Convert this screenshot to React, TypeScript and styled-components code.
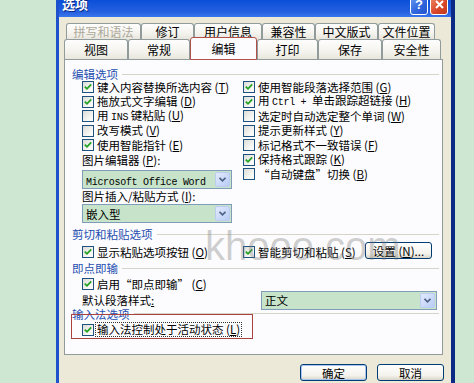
import React from 'react';
import styled, { createGlobalStyle } from 'styled-components';

const GlobalStyle = createGlobalStyle`
  html, body { margin: 0; padding: 0; }
  body {
    background: #cde7d2;
    font-family: "Noto Sans CJK SC", "Liberation Sans", sans-serif;
    font-size: 12px;
    color: #000;
  }
`;

const Page = styled.div`
  width: 474px;
  height: 383px;
  overflow: hidden;
  display: flex;
  padding-left: 56px;
  box-sizing: border-box;
`;

const Dialog = styled.div`
  flex: none;
  width: 399px;
  height: 420px;
  box-sizing: border-box;
  display: flex;
  flex-direction: column;
  background: #ece9d8;
  border-left: 3px solid #1d52cc;
  border-right: 4px solid #0a2a86;
`;

const TitleBar = styled.div`
  height: 15px;
  overflow: hidden;
  display: flex;
  align-items: flex-end;
  justify-content: space-between;
  padding: 0 3px 2px 3px;
  background: linear-gradient(#0a4fd8, #2560e0 70%, #3a76ea);
`;

const Title = styled.div`
  color: #fff;
  font-weight: bold;
  font-size: 13px;
  line-height: 13px;
  margin-bottom: 5px;
  text-shadow: 1px 1px 0 #0a2a86;
`;

const Caption = styled.div`
  display: flex;
  gap: 2px;
`;

const CapButton = styled.div<{ $kind: 'help' | 'close' }>`
  width: 18px;
  height: 21px;
  box-sizing: border-box;
  border: 1px solid #fff;
  border-radius: 3px;
  display: flex;
  align-items: center;
  justify-content: center;
  color: #fff;
  font-weight: bold;
  font-family: "Liberation Sans", sans-serif;
  font-size: 13px;
  background: ${(p) =>
    p.$kind === 'close'
      ? 'linear-gradient(135deg, #f0906e, #d9472a 60%, #c23a1e)'
      : 'linear-gradient(135deg, #6d9cf4, #2e64dc 60%, #2356cc)'};
`;

const Body = styled.div`
  display: flex;
  flex-direction: column;
  padding: 6px 7px 0 5px;
`;

const Tabs = styled.div`
  display: flex;
  flex-direction: column;
`;

const TabRow = styled.div<{ $indent: number; $height: number }>`
  display: flex;
  align-items: flex-start;
  height: ${(p) => p.$height}px;
  padding-left: ${(p) => p.$indent}px;
`;

const Tab = styled.div<{ $w: number; $active?: boolean; $disabled?: boolean }>`
  flex: none;
  width: ${(p) => p.$w}px;
  height: ${(p) => (p.$active ? '23px' : '100%')};
  margin-top: ${(p) => (p.$active ? -2 : 0)}px;
  box-sizing: border-box;
  border: 1px solid ${(p) => (p.$active ? '#b0504a' : '#919b9c')};
  border-bottom: ${(p) => (p.$active ? '1px solid #b0504a' : 'none')};
  border-radius: 3px 3px 0 0;
  background: ${(p) =>
    p.$active ? '#fcfcfe' : 'linear-gradient(#fefefe, #f4f3ee 60%, #e8e6dc)'};
  color: ${(p) => (p.$disabled ? '#aca899' : '#000')};
  display: flex;
  align-items: center;
  justify-content: center;
  font-size: 12px;
  line-height: 14px;
  position: relative;
  z-index: ${(p) => (p.$active ? 2 : 0)};
`;

const Panel = styled.div`
  position: relative;
  width: 379px;
  height: 296px;
  box-sizing: border-box;
  border: 1px solid #919b9c;
  background: #fcfcfe;
  padding: 8px 3px 0 7px;
  display: flex;
  flex-direction: column;
  font-size: 11.5px;
`;

const GroupHeader = styled.div<{ $mt?: number }>`
  display: flex;
  align-items: center;
  gap: 4px;
  height: 12px;
  margin-top: ${(p) => p.$mt ?? 0}px;
  color: #1f4fb0;
  font-size: 11.5px;
  line-height: 12px;
  &::after {
    content: '';
    flex: 1;
    height: 1px;
    background: #d6d4c8;
  }
`;

const OptionGrid = styled.div`
  display: grid;
  grid-template-columns: 161px 1fr;
  margin-left: 10px;
`;

const Column = styled.div`
  display: flex;
  flex-direction: column;
`;

const Row = styled.div<{ $h?: number; $mt?: number }>`
  display: flex;
  align-items: center;
  height: ${(p) => p.$h ?? 14.5}px;
  margin-top: ${(p) => p.$mt ?? 0}px;
  white-space: nowrap;
`;

const Box = styled.span`
  flex: none;
  width: 12px;
  height: 12px;
  box-sizing: border-box;
  border: 1px solid #1c5180;
  background: linear-gradient(135deg, #dcdcd7, #fbfbf9 80%);
  display: flex;
  align-items: center;
  justify-content: center;
`;

const OptText = styled.span<{ $focus?: boolean }>`
  margin-left: 2px;
  font-size: 11.5px;
  line-height: 13px;
  padding: 0 1px;
  outline: ${(p) => (p.$focus ? '1px dotted #333' : 'none')};
`;

const Key = styled.span`
  text-decoration: underline;
`;

const Mono = styled.span`
  font-family: "Liberation Mono", monospace;
  font-size: 10px;
  letter-spacing: -0.3px;
`;

const FieldLabel = styled.div<{ $h: number }>`
  height: ${(p) => p.$h}px;
  display: flex;
  align-items: center;
  font-size: 11.5px;
  white-space: nowrap;
`;

const Select = styled.div<{ $w: number; $mt?: number }>`
  flex: none;
  width: ${(p) => p.$w}px;
  height: 19px;
  margin-top: ${(p) => p.$mt ?? 0}px;
  box-sizing: border-box;
  border: 1px solid #7f9db9;
  background: #c7e4ca;
  display: flex;
  align-items: center;
  padding-left: 3px;
  font-size: 11.5px;
  white-space: nowrap;
`;

const SelectValue = styled.span`
  flex: 1;
  overflow: hidden;
`;

const ArrowBtn = styled.span`
  flex: none;
  width: 15px;
  height: 15px;
  margin-right: 1px;
  box-sizing: border-box;
  border: 1px solid #bccbf0;
  border-radius: 2px;
  background: linear-gradient(135deg, #e2eafc, #b8ccf6);
  display: flex;
  align-items: center;
  justify-content: center;
`;

const PushButton = styled.div<{ $w: number; $default?: boolean }>`
  flex: none;
  width: ${(p) => p.$w}px;
  height: 17px;
  box-sizing: border-box;
  border: 1px solid #003c74;
  border-radius: 3px;
  background: linear-gradient(#ffffff, #f3f2ec 70%, #d9d5c9);
  box-shadow: ${(p) => (p.$default ? 'inset 0 0 0 1px #a8c4f0' : 'none')};
  display: flex;
  align-items: center;
  justify-content: center;
  font-size: 11.5px;
  white-space: nowrap;
`;

const CutCell = styled.div`
  display: flex;
  align-items: center;
  justify-content: space-between;
  padding-right: 7px;
`;

const StyleRow = styled.div`
  display: flex;
  align-items: center;
  justify-content: space-between;
  height: 17px;
  margin-left: 10px;
  margin-right: 2px;
`;

const ImeSection = styled.div`
  position: relative;
  display: flex;
  flex-direction: column;
  margin-top: -1px;
`;

const Annotation = styled.div`
  position: absolute;
  left: -1px;
  top: 6px;
  width: 182px;
  height: 25px;
  box-sizing: border-box;
  border: 1px solid #a8423f;
  pointer-events: none;
`;

const Watermark = styled.div`
  position: absolute;
  left: 140px;
  top: 166px;
  font-family: "Liberation Sans", sans-serif;
  font-size: 40px;
  line-height: 40px;
  color: rgba(120, 120, 120, 0.36);
  pointer-events: none;
  white-space: nowrap;
`;

const ButtonBar = styled.div`
  display: flex;
  justify-content: flex-end;
  gap: 10px;
  margin-top: 9px;
`;

const CheckMark = () => (
  <svg width="8" height="8" viewBox="0 0 8 8">
    <path d="M0.8 3.6 L3 5.8 L7.2 1.4" stroke="#21a121" strokeWidth="1.7" fill="none" />
  </svg>
);

const Arrow = () => (
  <svg width="7" height="5" viewBox="0 0 7 5">
    <path d="M0.5 0.8 L3.5 3.8 L6.5 0.8" stroke="#4d6185" strokeWidth="1.6" fill="none" />
  </svg>
);

const Option: React.FC<{ checked?: boolean; focus?: boolean; children: React.ReactNode; h?: number; mt?: number }> = ({
  checked,
  focus,
  children,
  h,
  mt,
}) => (
  <Row $h={h} $mt={mt}>
    <Box>{checked && <CheckMark />}</Box>
    <OptText $focus={focus}>{children}</OptText>
  </Row>
);

const Combo: React.FC<{ w: number; mt?: number; children: React.ReactNode }> = ({ w, mt, children }) => (
  <Select $w={w} $mt={mt}>
    <SelectValue>{children}</SelectValue>
    <ArrowBtn>
      <Arrow />
    </ArrowBtn>
  </Select>
);

const row1 = [
  { t: '拼写和语法', w: 75, disabled: true },
  { t: '修订', w: 53 },
  { t: '用户信息', w: 68 },
  { t: '兼容性', w: 53 },
  { t: '中文版式', w: 63 },
  { t: '文件位置', w: 57 },
];

const row2 = [
  { t: '视图', w: 64 },
  { t: '常规', w: 62 },
  { t: '编辑', w: 67, active: true },
  { t: '打印', w: 61 },
  { t: '保存', w: 64 },
  { t: '安全性', w: 59 },
];

export default function App() {
  return (
    <>
      <GlobalStyle />
      <Page>
        <Dialog>
          <TitleBar>
            <Title>选项</Title>
            <Caption>
              <CapButton $kind="help">?</CapButton>
              <CapButton $kind="close">
                <svg width="9" height="9" viewBox="0 0 9 9">
                  <path d="M1 1 L8 8 M8 1 L1 8" stroke="#fff" strokeWidth="2" />
                </svg>
              </CapButton>
            </Caption>
          </TitleBar>
          <Body>
            <Tabs>
              <TabRow $indent={2} $height={16}>
                {row1.map((t) => (
                  <Tab key={t.t} $w={t.w} $disabled={t.disabled}>
                    {t.t}
                  </Tab>
                ))}
              </TabRow>
              <TabRow $indent={0} $height={20}>
                {row2.map((t) => (
                  <Tab key={t.t} $w={t.w} $active={t.active}>
                    {t.t}
                  </Tab>
                ))}
              </TabRow>
            </Tabs>
            <Panel>
              <GroupHeader>编辑选项</GroupHeader>
              <OptionGrid>
                <Column>
                  <Option checked>
                    键入内容替换所选内容 (<Key>T</Key>)
                  </Option>
                  <Option checked>
                    拖放式文字编辑 (<Key>D</Key>)
                  </Option>
                  <Option>
                    用 <Mono>INS</Mono> 键粘贴 (<Key>U</Key>)
                  </Option>
                  <Option>
                    改写模式 (<Key>V</Key>)
                  </Option>
                  <Option checked>
                    使用智能指针 (<Key>E</Key>)
                  </Option>
                  <FieldLabel $h={14.5}>
                    图片编辑器 (<Key>P</Key>):
                  </FieldLabel>
                  <Combo w={150} mt={3}>
                    <Mono>Microsoft Office Word</Mono>
                  </Combo>
                  <FieldLabel $h={14}>
                    图片插入/粘贴方式 (<Key>I</Key>):
                  </FieldLabel>
                  <Combo w={150} mt={1}>
                    嵌入型
                  </Combo>
                </Column>
                <Column>
                  <Option checked>
                    使用智能段落选择范围 (<Key>G</Key>)
                  </Option>
                  <Option checked>
                    用 <Mono>Ctrl + </Mono>单击跟踪超链接 (<Key>H</Key>)
                  </Option>
                  <Option>
                    选定时自动选定整个单词 (<Key>W</Key>)
                  </Option>
                  <Option>
                    提示更新样式 (<Key>Y</Key>)
                  </Option>
                  <Option>
                    标记格式不一致错误 (<Key>F</Key>)
                  </Option>
                  <Option checked>
                    保持格式跟踪 (<Key>K</Key>)
                  </Option>
                  <Option>
                    “自动键盘”切换 (<Key>B</Key>)
                  </Option>
                </Column>
              </OptionGrid>

              <GroupHeader $mt={5}>剪切和粘贴选项</GroupHeader>
              <OptionGrid>
                <Option checked h={18} mt={3}>
                  显示粘贴选项按钮 (<Key>O</Key>)
                </Option>
                <CutCell>
                  <Option checked h={18} mt={3}>
                    智能剪切和粘贴 (<Key>S</Key>)
                  </Option>
                  <PushButton $w={67}>
                    设置 (<Key>N</Key>)...
                  </PushButton>
                </CutCell>
              </OptionGrid>

              <GroupHeader $mt={1}>即点即输</GroupHeader>
              <OptionGrid>
                <Option checked mt={3}>
                  启用“即点即输” (<Key>C</Key>)
                </Option>
              </OptionGrid>
              <StyleRow>
                <FieldLabel $h={17}>
                  默认段落样式<Key>:</Key>
                </FieldLabel>
                <Combo w={176}>正文</Combo>
              </StyleRow>

              <ImeSection>
                <GroupHeader>输入法选项</GroupHeader>
                <OptionGrid>
                  <Option checked focus mt={3}>
                    输入法控制处于活动状态 (<Key>L</Key>)
                  </Option>
                </OptionGrid>
                <Annotation />
              </ImeSection>

              <Watermark>khooo.com</Watermark>
            </Panel>
            <ButtonBar>
              <PushButton $w={67} $default>
                确定
              </PushButton>
              <PushButton $w={67}>取消</PushButton>
            </ButtonBar>
          </Body>
        </Dialog>
      </Page>
    </>
  );
}
